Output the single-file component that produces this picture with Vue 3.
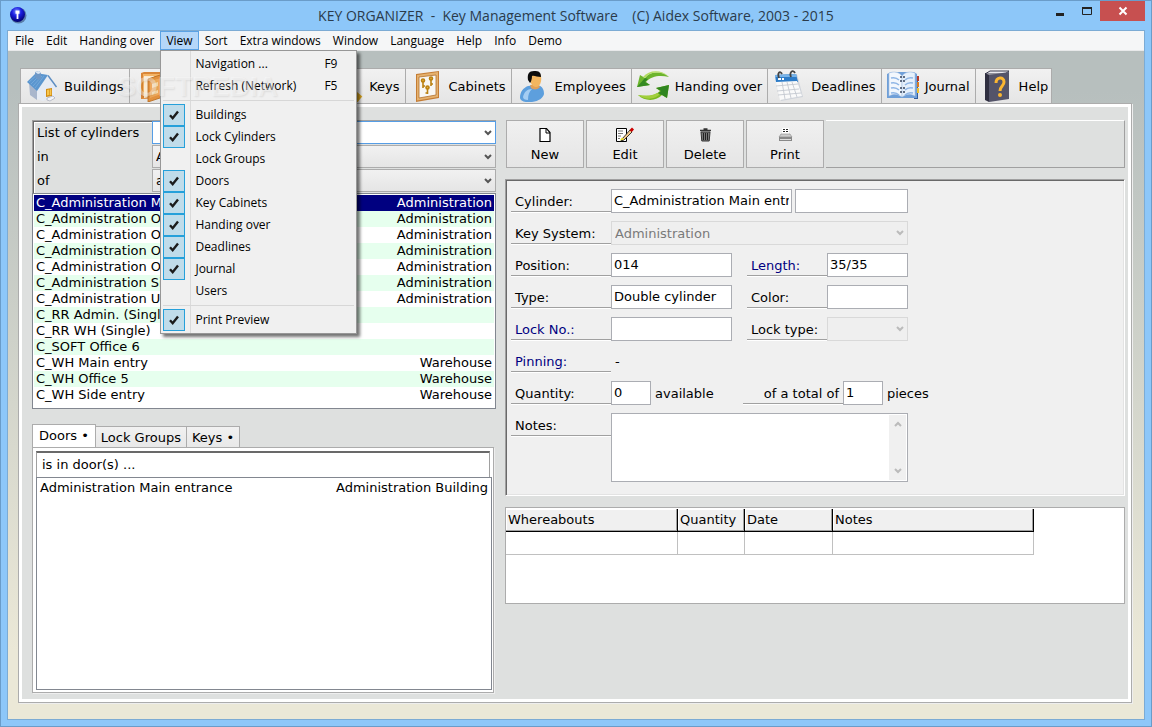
<script setup>
import { ref } from 'vue'

const title = 'KEY ORGANIZER  -  Key Management Software    (C) Aidex Software, 2003 - 2015'

const menus = ['File', 'Edit', 'Handing over', 'View', 'Sort', 'Extra windows', 'Window', 'Language', 'Help', 'Info', 'Demo']

const viewMenu = [
  [
    { label: 'Navigation ...', key: 'F9' },
    { label: 'Refresh (Network)', key: 'F5' },
  ],
  [
    { label: 'Buildings', on: true },
    { label: 'Lock Cylinders', on: true },
    { label: 'Lock Groups' },
    { label: 'Doors', on: true },
    { label: 'Key Cabinets', on: true },
    { label: 'Handing over', on: true },
    { label: 'Deadlines', on: true },
    { label: 'Journal', on: true },
    { label: 'Users' },
  ],
  [{ label: 'Print Preview', on: true }],
]

const tabs = ['Buildings', 'Doors', 'Cylinders', 'Keys', 'Cabinets', 'Employees', 'Handing over', 'Deadlines', 'Journal', 'Help']
const activeTab = ref('Cylinders')

const cylinders = [
  ['C_Administration Main entry', 'Administration'],
  ['C_Administration Office 1', 'Administration'],
  ['C_Administration Office 2', 'Administration'],
  ['C_Administration Office 3', 'Administration'],
  ['C_Administration Office 4', 'Administration'],
  ['C_Administration Side entry', 'Administration'],
  ['C_Administration Utility', 'Administration'],
  ['C_RR Admin. (Single)', ''],
  ['C_RR WH (Single)', ''],
  ['C_SOFT Office 6', ''],
  ['C_WH Main entry', 'Warehouse'],
  ['C_WH Office 5', 'Warehouse'],
  ['C_WH Side entry', 'Warehouse'],
]
const selected = ref(0)

const filters = [
  { id: 'f-list', label: 'List of cylinders', value: '' },
  { id: 'f-in', label: 'in', value: 'All buildings' },
  { id: 'f-of', label: 'of', value: 'all key systems' },
]

const actions = ['New', 'Edit', 'Delete', 'Print']
</script>

<template>
  <div class="window">
    <header class="titlebar">
      <svg class="app-icon" viewBox="0 0 18 18" aria-hidden="true">
        <defs>
          <radialGradient id="orb" cx="45%" cy="30%" r="70%">
            <stop offset="0" stop-color="#7a8cff" />
            <stop offset=".45" stop-color="#1a1ee0" />
            <stop offset="1" stop-color="#00006a" />
          </radialGradient>
        </defs>
        <circle cx="9.5" cy="9.5" r="8" fill="#44608a" opacity=".7" />
        <circle cx="8.5" cy="8.5" r="7.5" fill="url(#orb)" />
        <path d="M6.500 4.500h4v3.200H9.400V13H7.600V7.700H6.500z" fill="#fff" />
      </svg>
      <h1>{{ title }}</h1>
      <div class="controls">
        <button class="ctl" aria-label="Minimize">
          <svg viewBox="0 0 12 12"><path d="M2 9.500h8" stroke="#222" stroke-width="3" /></svg>
        </button>
        <button class="ctl" aria-label="Maximize">
          <svg viewBox="0 0 12 12"><path d="M1.500 3h9v6.500h-9z" fill="none" stroke="#222" /><path d="M1 3h10" stroke="#222" stroke-width="2" /></svg>
        </button>
        <button class="ctl close" aria-label="Close">
          <svg viewBox="0 0 12 12"><path d="M2.500 2.500l7 7M9.500 2.500l-7 7" stroke="#fff" stroke-width="2" /></svg>
        </button>
      </div>
    </header>

    <div class="client">
      <nav class="menubar">
        <div v-for="m in menus" :key="m" class="menu-slot">
          <button class="menu" :class="{ open: m === 'View' }">{{ m }}</button>
          <div v-if="m === 'View'" class="dropdown" role="menu">
            <div v-for="(group, g) in viewMenu" :key="g" class="group">
              <button v-for="item in group" :key="item.label" class="item" role="menuitem">
                <span class="tick" :class="{ on: item.on }">
                  <svg v-if="item.on" viewBox="0 0 12 12"><path d="M2 6.200l2.700 3L10 2.500" fill="none" stroke="#1c1c1c" stroke-width="2.400" /></svg>
                </span>
                <span class="name">{{ item.label }}</span>
                <span class="short">{{ item.key }}</span>
              </button>
            </div>
            <span class="watermark" aria-hidden="true">SOFTPEDIA</span>
          </div>
        </div>
      </nav>

      <div class="tabs" role="tablist">
        <button v-for="t in tabs" :key="t" class="tab" :class="{ active: t === activeTab }" role="tab" @click="activeTab = t">
          <svg class="tab-icon" viewBox="0 0 32 32" aria-hidden="true">
            <g v-if="t === 'Buildings'">
              <path d="M3 12l8 7v11l-7-5z" fill="#a9b6cc" />
              <path d="M11 19L22 6l7 10v11l-12 4-6-2z" fill="#e6ebf4" />
              <path d="M1 12L10 3l12 2-11 16z" fill="#5b96cf" />
              <path d="M3 12l9-8M5 14l9-9M7 16l9-10M9 18l9-12" stroke="#84b4e0" stroke-width=".6" />
              <path d="M22 5.500L30.500 17" stroke="#5c8dc2" stroke-width="1.400" />
              <path d="M9 2l4-1 2 2v6l-3 1-3-3z" fill="#6f98c6" />
              <path d="M9 2l4-1 2 2-3 1z" fill="#dbe6f3" />
              <path d="M20 19l6-1v8l-6 1z" fill="#d18c14" /><path d="M21 20l2-.4v5.500l-2 .4zM23.600 19.500l1.700-.3V25l-1.700.3z" fill="#f7c64f" />
              <path d="M21 28l6-2 2 2-5 3-3-1z" fill="#f2f3f7" stroke="#9aa0b0" stroke-width=".6" />
            </g>
            <g v-else-if="t === 'Doors'">
              <path d="M6 3l3-1h20v26l-23 1z" fill="#d98638" />
              <path d="M8 4h19v22H8z" fill="#f4b567" />
              <path d="M9 6h10v20l-10 2z" fill="#fbead0" />
              <path d="M13 9l15-5v23l-15 5z" fill="#e2913e" stroke="#b66a20" stroke-width=".8" />
              <path d="M15 11l11-3v16l-11 4z" fill="#eea85a" />
              <path d="M17 14l6-2v4l-6 2zM17 22l6-2v3l-6 2z" fill="#f9d9a8" />
            </g>
            <g v-else-if="t === 'Cylinders'">
              <circle cx="16" cy="11" r="8" fill="#d8b040" stroke="#8d6a10" />
              <path d="M12 16h8v13h-8z" fill="#d8b040" stroke="#8d6a10" />
              <path d="M15 8h2v7h-2z" fill="#5b430a" />
            </g>
            <g v-else-if="t === 'Keys'">
              <circle cx="11" cy="11" r="7" fill="none" stroke="#d9a520" stroke-width="4" />
              <path d="M16 16l14 12M24 24l-3 4M28 27l-3 4" stroke="#d9a520" stroke-width="4" />
            </g>
            <g v-else-if="t === 'Cabinets'">
              <path d="M5 4l23-3v27L5 32z" fill="#c47c34" />
              <path d="M6 5l21-3v25L6 30.500z" fill="#e5b16e" />
              <path d="M8 7l17-2v20L8 28z" fill="#f8f7f4" stroke="#b0702e" stroke-width=".8" />
              <g stroke="#bb8112" stroke-width="1.600" fill="#e2af3a">
                <path d="M12 11v7M20 9v7M16.500 17v7" />
                <circle cx="12" cy="10.500" r="1.500" /><circle cx="20" cy="8.500" r="1.500" /><circle cx="16.500" cy="17.500" r="1.500" />
                <path d="M12 16h2M20 14h2M16.500 23h-2" />
              </g>
            </g>
            <g v-else-if="t === 'Employees'">
              <path d="M3 28c0-6 3-10 8-12l9-1c6 1 7 5 7 9-1 4-5 7-12 8-6 1-12-1-12-4z" fill="#5d9fdd" />
              <path d="M6 27c1-5 4-8 9-8-3 3-4 6-4 11-3 0-5-1-5-3z" fill="#a4cdf3" />
              <path d="M13 15l8-1 2 3c-2 3-7 3-9 1z" fill="#e0a05a" />
              <path d="M12 5c1-3 11-4 12 1 1 5-1 11-5 11-4 0-7-6-7-12z" fill="#f3b65f" />
              <path d="M11 10C10 4 12 1 17 1c5 0 7 1 7 6-4 0-7-2-9-1 0 3-1 6-2 7z" fill="#0c0c0c" />
            </g>
            <g v-else-if="t === 'Handing over'">
              <path d="M32 7C25 1 13 1 8 8L3 5 0 17l13-2-4-3c5-6 14-7 23-5z" fill="#6cb52d" />
              <path d="M32 7C25 1 13 1 8 8L6 7c6-7 18-8 26 0z" fill="#b4dd62" />
              <path d="M0 17l13-2-5-3 3-3-3-1z" fill="#358a22" />
              <path d="M1 25c7 7 19 6 24 0l5 3 2-13-13 3 4 3c-5 5-13 6-22 4z" fill="#79b91d" />
              <path d="M32 15l-13 3 5 3-4 3 5 1 5 3z" fill="#2f8520" />
              <path d="M1 25c7 5 17 5 22-1l-3-1c-5 3-11 3-19 2z" fill="#a2cf3c" />
            </g>
            <g v-else-if="t === 'Deadlines'">
              <path d="M3 5l21-1 6 23-22 4z" fill="#cfd3da" />
              <path d="M2 5l21-1 2 8H3z" fill="#2d7cc8" /><path d="M2 5l21-1 1 3H2z" fill="#78b3e8" />
              <path d="M3 12l21-1 5 15-22 4z" fill="#fafafa" />
              <path d="M3 16l22-2M4 21l22-2M5 25l23-2M9 12l3 17M14 12l4 16M19 12l5 15" stroke="#c4c8d0" stroke-width=".9" />
              <path d="M5 9h3M9 9h2" stroke="#fff" stroke-width="2" />
              <path d="M6 8c-2-5 1-8 3-4M18 7c-2-5 2-8 4-4" fill="none" stroke="#444" stroke-width="1.800" />
            </g>
            <g v-else-if="t === 'Journal'">
              <path d="M27 6h4v23h-4z" fill="#335c9c" />
              <path d="M29 6h3v5h-3z" fill="#b33a2c" /><path d="M29 12h3v5h-3z" fill="#d97a20" /><path d="M29 18h3v5h-3z" fill="#f0c030" />
              <path d="M0 4l4-2h23l3 2v24H0z" fill="#6f9fd8" />
              <path d="M2 3c5-2 10-1 13 3v21c-4-3-8-4-13-1z" fill="#f2f7fd" stroke="#a9c3e3" stroke-width=".6" />
              <path d="M28 3c-5-2-10-1-13 3v21c4-3 8-4 13-1z" fill="#e6f0fb" stroke="#a9c3e3" stroke-width=".6" />
              <path d="M4 8c4-1 6 0 8 2M4 13c4-1 6 0 8 2M4 18c4-1 6 0 8 2M4 23c4-1 6 0 8 2M26 8c-4-1-6 0-8 2M26 13c-4-1-6 0-8 2M26 18c-4-1-6 0-8 2M26 23c-4-1-6 0-8 2" fill="none" stroke="#8fb6e6" stroke-width="1.500" />
              <path d="M13 7h5M13 11h5M13 18h5M13 22h5" stroke="#35435c" stroke-width="1.600" stroke-dasharray="2 1" />
            </g>
            <g v-else>
              <path d="M4 4l5-3h19l-4 3z" fill="#e9e9ee" stroke="#3a3a4c" />
              <path d="M4 3l4 2v27l-4-2z" fill="#2f2f40" />
              <path d="M8 5l20-3v27L8 32z" fill="#545469" />
              <path d="M15 13c0-6 8-7 8-1 0 4-4 4-4 9" fill="none" stroke="#fbb631" stroke-width="3" />
              <circle cx="19" cy="25" r="2" fill="#fbb631" />
            </g>
          </svg>
          {{ t }}
        </button>
      </div>

      <main class="panel">
        <section class="left">
          <div class="filters">
            <div v-for="(f, i) in filters" :key="f.id" class="filter">
              <label :for="f.id">{{ f.label }}</label>
              <span class="combo" :class="{ focus: i === 0 }">
                <select :id="f.id"><option>{{ f.value }}</option></select>
                <svg class="chev" viewBox="0 0 8 8" aria-hidden="true"><path d="M1 2l3 3 3-3" fill="none" stroke="#555" stroke-width="2" /></svg>
              </span>
            </div>
          </div>
          <div class="list">
            <table>
              <tbody>
                <tr v-for="(c, i) in cylinders" :key="i" :class="{ sel: i === selected }" @click="selected = i">
                  <td>{{ c[0] }}</td>
                  <td class="end">{{ c[1] }}</td>
                </tr>
              </tbody>
            </table>
          </div>

          <div class="subtabs" role="tablist">
            <button class="subtab active" role="tab">Doors •</button>
            <button class="subtab" role="tab">Lock Groups</button>
            <button class="subtab" role="tab">Keys •</button>
          </div>
          <div class="subpanel">
            <div class="door-head">is in door(s) ...</div>
            <div class="doors">
              <div class="door"><span>Administration Main entrance</span><span>Administration Building</span></div>
            </div>
          </div>
        </section>

        <section class="right">
          <div class="toolbar">
            <button v-for="a in actions" :key="a" class="action">
              <svg viewBox="0 0 20 16" aria-hidden="true">
                <g v-if="a === 'New'"><path d="M5 1.500h6.500l3.500 4v9H5z" fill="#fff" stroke="#000" stroke-width="1.200" /><path d="M11 1.500v4.500h4" fill="none" stroke="#000" /></g>
                <g v-else-if="a === 'Edit'">
                  <path d="M1.500 1.500h10v13h-10z" fill="#fff" stroke="#000" />
                  <path d="M3 4h5M3 6.500h5M3 9h3M3 11.500h2" stroke="#777" />
                  <path d="M7 12l8-9 2 2-8 8-3 1z" fill="#f3c98b" stroke="#111" stroke-width=".8" />
                  <path d="M14.500 3l2.500-2.500 2 2L16.800 5z" fill="#c00" /><path d="M5 13.500l4-1-2-2z" fill="#e8e020" />
                </g>
                <g v-else-if="a === 'Delete'">
                  <path d="M5 3.500h11M8.500 2h4" stroke="#333" stroke-width="1.600" />
                  <path d="M6 5h9l-.8 9H6.800z" fill="#777" stroke="#333" /><path d="M8.500 6v7M10.500 6v7M12.500 6v7" stroke="#222" />
                </g>
                <g v-else>
                  <path d="M7 1h7v7H7z" fill="#fff" /><path d="M8 2.500h5M8 4.500h5" stroke="#222" stroke-dasharray="2 1" />
                  <path d="M6 7h9l2 3H4z" fill="#ccc" stroke="#888" stroke-width=".6" /><path d="M4 10h13v4H4z" fill="#888" /><path d="M5 12.500h11" stroke="#ddd" />
                </g>
              </svg>
              {{ a }}
            </button>
            <div class="tool-rest"></div>
          </div>

          <form class="form" @submit.prevent>
            <div class="row">
              <label class="lbl" for="cyl">Cylinder:</label>
              <input id="cyl" class="w181" value="C_Administration Main entry" />
              <input class="w113" aria-label="Cylinder suffix" />
            </div>
            <div class="row">
              <label class="lbl" for="sys">Key System:</label>
              <span class="combo off wide">
                <select id="sys" disabled><option>Administration</option></select>
                <svg class="chev" viewBox="0 0 8 8" aria-hidden="true"><path d="M1 2l3 3 3-3" fill="none" stroke="#bbb" stroke-width="2" /></svg>
              </span>
            </div>
            <div class="row">
              <label class="lbl" for="pos">Position:</label>
              <input id="pos" class="w121" value="014" />
              <label class="lbl mid navy" for="len">Length:</label>
              <input id="len" class="w81" value="35/35" />
            </div>
            <div class="row">
              <label class="lbl" for="typ">Type:</label>
              <input id="typ" class="w121" value="Double cylinder" />
              <label class="lbl mid" for="col">Color:</label>
              <input id="col" class="w81" />
            </div>
            <div class="row">
              <label class="lbl navy" for="lno">Lock No.:</label>
              <input id="lno" class="w121" />
              <label class="lbl mid" for="lty">Lock type:</label>
              <span class="combo off w81">
                <select id="lty" disabled><option></option></select>
                <svg class="chev" viewBox="0 0 8 8" aria-hidden="true"><path d="M1 2l3 3 3-3" fill="none" stroke="#bbb" stroke-width="2" /></svg>
              </span>
            </div>
            <div class="row">
              <span class="lbl navy">Pinning:</span>
              <output class="text">-</output>
            </div>
            <div class="row">
              <label class="lbl" for="qty">Quantity:</label>
              <input id="qty" class="w40" value="0" />
              <span class="text avail">available</span>
              <label class="lbl total" for="tot">of a total of</label>
              <input id="tot" class="w40" value="1" />
              <span class="text">pieces</span>
            </div>
            <div class="row notes-row">
              <label class="lbl" for="notes">Notes:</label>
              <div class="notes">
                <textarea id="notes"></textarea>
                <div class="scroll" aria-hidden="true">
                  <svg viewBox="0 0 8 8"><path d="M1 6l3-3 3 3" fill="none" stroke="#bbb" stroke-width="2" /></svg>
                  <svg viewBox="0 0 8 8"><path d="M1 2l3 3 3-3" fill="none" stroke="#bbb" stroke-width="2" /></svg>
                </div>
              </div>
            </div>
          </form>

          <div class="grid-box">
            <table class="where">
              <colgroup><col class="c1" /><col class="c2" /><col class="c3" /><col class="c4" /></colgroup>
              <thead><tr><th>Whereabouts</th><th>Quantity</th><th>Date</th><th>Notes</th></tr></thead>
              <tbody><tr><td></td><td></td><td></td><td></td></tr></tbody>
            </table>
          </div>
        </section>
      </main>
    </div>
  </div>
</template>

<style>
body { background: #8dc7f9; }
</style>

<style scoped>
* { box-sizing: border-box; }
button, input, select, textarea { font: inherit; color: inherit; margin: 0; }
.window {
  min-height: 100vh;
  display: flex;
  flex-direction: column;
  padding: 0 6px 6px;
  border: 1px solid #6a9cc9;
  background: #8dc7f9;
  font: 13px "DejaVu Sans", Verdana, sans-serif;
  color: #000;
}
.titlebar { position: relative; display: flex; align-items: center; justify-content: center; height: 29px; }
.app-icon { position: absolute; left: 2px; top: 5px; width: 18px; height: 18px; }
h1 { margin: 0; font: 14px/20px "Open Sans", sans-serif; color: #2b3b4b; white-space: pre; }
.controls { position: absolute; right: 0; top: 0; display: flex; }
.ctl { width: 27px; height: 20px; padding: 0; border: 0; background: none; display: flex; align-items: center; justify-content: center; }
.ctl svg { width: 12px; height: 12px; }
.close { width: 45px; background: #c75050; }

.client {
  flex: 1;
  display: flex;
  flex-direction: column;
  border: 1px solid #7cabd4;
  background: linear-gradient(#b7bfbe 20px, #b7bfbe 60px, #ebe8d7 620px);
}
.menubar { display: flex; height: 20px; padding-left: 1px; background: #f5f6f7; border-bottom: 1px solid #e8e9ea; font: 12px/16px "Open Sans", sans-serif; }
.menu-slot { position: relative; }
.menu { height: 19px; padding: 0 5px; border: 1px solid transparent; background: none; white-space: nowrap; }
.menu.open { background: #b5d7f9; border-color: #5ba2e4; }
.dropdown {
  position: absolute; z-index: 5; left: 0; top: 19px; width: 197px; padding: 2px;
  border: 1px solid #979797;
  background: linear-gradient(90deg, transparent 29px, #dadada 29px, #dadada 30px, transparent 30px), #f0f0f0;
  box-shadow: 3px 3px 3px rgba(0, 0, 0, .55);
}
.group + .group { margin-top: 3px; padding-top: 3px; border-top: 1px solid #d7d7d7; }
.item { display: flex; align-items: center; width: 100%; height: 22px; padding: 0; border: 0; background: none; text-align: left; }
.tick { display: flex; align-items: center; justify-content: center; width: 22px; height: 22px; margin-right: 10px; }
.tick.on { border: 1px solid #26a0da; background: #c0dcea; }
.tick svg { width: 12px; height: 12px; }
.name { flex: 1; white-space: nowrap; }
.short { width: 30px; }
.watermark {
  position: absolute; left: -44px; top: 20px; pointer-events: none;
  font: bold 28px/32px "Liberation Sans", sans-serif;
  color: rgba(255, 255, 255, .4); text-shadow: 1px 1px 2px rgba(0, 0, 0, .08);
}

.tabs { display: flex; margin: 17px 12px 0 12px; }
.tab {
  display: flex; align-items: center; height: 35px; padding: 0 5px;
  border: 1px solid #acacac; border-bottom: 0; border-right-width: 0;
  background: linear-gradient(#f1f1f1, #e5e5e5); white-space: nowrap;
}
.tab:last-child { border-right-width: 1px; padding-right: 3px; }
.tab.active { background: #fff; }
.tab-icon { width: 32px; height: 32px; margin-right: 6px; }

.panel {
  flex: 1; display: grid; grid-template-columns: minmax(0, 464fr) minmax(0, 620fr); gap: 9px;
  margin: 0 12px 16px 10px; padding: 16px 6px 9px 13px;
  border: 1px solid #acacac; background: #dee0df;
  box-shadow: inset 0 0 0 3px #fff, 1px 1px #eee;
}
.left, .right { display: flex; flex-direction: column; min-width: 0; }
.filters { border: solid #a0a0a0; border-width: 1px 0 0 1px; box-shadow: inset 1px 1px #696969, inset 2px 2px #fff; }
.filter { display: grid; grid-template-columns: 119px 1fr; height: 24px; }
.filter label { padding-left: 4px; line-height: 24px; }
.combo { position: relative; display: block; height: 23px; }
.combo select {
  appearance: none; display: block; width: 100%; height: 100%; padding: 0 20px 0 3px; border: 1px solid #acacac; border-radius: 0;
  background: linear-gradient(#f1f1f1, #e5e5e5); outline: 0;
}
.combo.focus select { background: #fff; border-color: #569de5; }
.combo.off { height: 24px; }
.combo.off select { background: #efefef; border-color: #d9d9d9; color: #7a7a7a; opacity: 1; }
.chev { position: absolute; right: 4px; top: 8px; width: 8px; height: 8px; pointer-events: none; }

.list { height: 216px; padding: 1px; border: 1px solid #828790; background: #fff; }
.list table { width: 100%; border-collapse: collapse; }
.list td { height: 16px; padding: 0 2px; line-height: 16px; white-space: nowrap; }
.list tr:nth-child(even) { background: #e6ffee; }
.list tr.sel { background: #000080; color: #fff; }
.end { text-align: right; }

.subtabs { display: flex; align-items: flex-end; margin-top: 15px; }
.subtab { height: 21px; padding: 0 5px; border: 1px solid #acacac; border-left-width: 0; border-bottom: 0; background: linear-gradient(#f1f1f1, #e8e8e8); }
.subtab.active { height: 23px; padding: 0 6px 2px; border-left-width: 1px; background: #fff; }
.subpanel {
  flex: 1; display: flex; flex-direction: column; margin-right: 2px; padding: 3px 1px 2px 3px;
  border: 1px solid #acacac; background: #fff; box-shadow: 1px 1px #eee;
}
.door-head { height: 26px; margin-right: 2px; padding-left: 5px; line-height: 24px; border: 1px solid #a0a0a0; border-width: 2px 1px 0; border-color: #696969 #a0a0a0; }
.doors { flex: 1; border: 1px solid #828790; padding: 2px 3px; }
.door { display: flex; justify-content: space-between; line-height: 16px; white-space: nowrap; }

.toolbar { display: flex; gap: 2px; padding-left: 1px; }
.action {
  display: flex; flex-direction: column; align-items: center; justify-content: flex-end; gap: 4px;
  width: 78px; height: 48px; padding: 0 0 5px; border: 1px solid #acacac; background: linear-gradient(#f0f0f0, #e5e5e5);
}
.action svg { width: 20px; height: 16px; }
.tool-rest { flex: 1; border: solid #a0a0a0; border-width: 1px 1px 1px 0; border-top-color: #fff; }

.form {
  margin-top: 11px; padding: 9px 5px 13px; display: flex; flex-direction: column; gap: 8px;
  border: 1px solid #a0a0a0; border-right-color: #fff; border-bottom-color: #fff;
  background: #f0f0f0; box-shadow: inset 1px 1px #696969, inset -1px -1px #e3e3e3;
}
.row { display: flex; height: 24px; }
.lbl { width: 100px; height: 23px; padding-left: 4px; line-height: 26px; border-bottom: 1px solid #a0a0a0; box-shadow: 0 1px #fff; white-space: nowrap; flex: none; }
.mid { width: 80px; margin-left: 15px; }
.navy { color: #000080; }
.total { text-align: right; padding-right: 4px; }
.text { padding-left: 4px; line-height: 26px; }
.avail { width: 92px; }
input { height: 24px; padding: 0 2px 2px; border: 1px solid #abadb3; border-radius: 0; background: #fff; outline: 0; flex: none; }
.w181 { width: 181px; margin-right: 3px; }
.w121 { width: 121px; }
.w113 { width: 113px; }
.w81 { width: 81px; }
.w40 { width: 40px; }
.wide { width: 297px; }
.notes-row { height: 69px; }
.notes { display: flex; width: 297px; height: 69px; padding: 1px; border: 1px solid #abadb3; background: #fff; }
.notes textarea { flex: 1; min-width: 0; padding: 2px; border: 0; outline: 0; resize: none; background: #fff; }
.scroll { display: flex; flex-direction: column; justify-content: space-between; align-items: center; width: 17px; padding: 5px 0; background: #f0f0f0; }
.scroll svg { width: 8px; height: 8px; }

.grid-box { height: 97px; margin-top: 11px; padding: 1px 0; border: 1px solid #acacac; background: #fff; }
.where { width: 528px; table-layout: fixed; border-collapse: separate; border-spacing: 0; }
.c1 { width: 172px; } .c2 { width: 67px; } .c3 { width: 88px; } .c4 { width: 201px; }
.where th { height: 23px; padding: 0 0 2px 2px; font-weight: normal; text-align: left; border: solid #000; border-width: 0 1px 1px 0; background: #f0f0f0; box-shadow: inset -1px -1px #a0a0a0, inset 1px 1px #fff; }
.where td { height: 23px; padding: 0; border: solid #c0c0c0; border-width: 0 1px 1px 0; }
</style>
